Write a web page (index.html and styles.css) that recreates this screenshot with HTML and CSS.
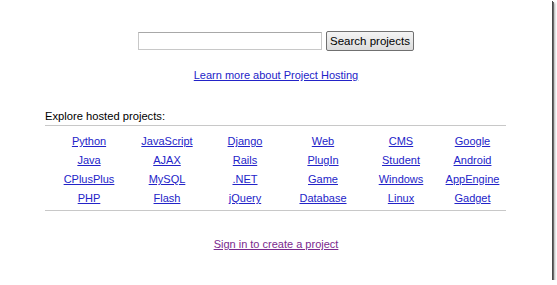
FILE: index.html
```html
<!DOCTYPE html>
<html lang="en">
<head>
  <meta charset="UTF-8">
  <meta name="viewport" content="width=device-width, initial-scale=1.0">
  <title>Project Hosting</title>
  <link rel="stylesheet" href="styles.css">
</head>
<body>
  <div class="frame">
    <form class="search" action="#">
      <input type="text" class="search-box" name="q">
      <button type="submit" class="search-btn">Search projects</button>
    </form>

    <p class="learn"><a href="#">Learn more about Project Hosting</a></p>

    <div class="explore">
      <div class="explore-title">Explore hosted projects:</div>
      <div class="labels">
        <a href="#">Python</a>
        <a href="#">JavaScript</a>
        <a href="#">Django</a>
        <a href="#">Web</a>
        <a href="#">CMS</a>
        <a href="#">Google</a>

        <a href="#">Java</a>
        <a href="#">AJAX</a>
        <a href="#">Rails</a>
        <a href="#">PlugIn</a>
        <a href="#">Student</a>
        <a href="#">Android</a>

        <a href="#">CPlusPlus</a>
        <a href="#">MySQL</a>
        <a href="#">.NET</a>
        <a href="#">Game</a>
        <a href="#">Windows</a>
        <a href="#">AppEngine</a>

        <a href="#">PHP</a>
        <a href="#">Flash</a>
        <a href="#">jQuery</a>
        <a href="#">Database</a>
        <a href="#">Linux</a>
        <a href="#">Gadget</a>
      </div>
    </div>

    <p class="signin"><a href="#" class="visited">Sign in to create a project</a></p>
  </div>
</body>
</html>
```

FILE: styles.css
```css
body {
  margin: 0;
  padding: 0;
  background: #fff;
  font-family: "Liberation Sans", Arial, sans-serif;
  font-size: 11px;
  color: #000;
}

.frame {
  width: 552px;
  height: 280px;
  background: #fff;
  box-shadow: 1px 1px 0 #4a4a4a, 2px 2px 0 #6a6a6a, 3px 3px 2px #b0b0b0;
  overflow: hidden;
}

a {
  color: #2323c8;
  text-decoration: underline;
}

a.visited {
  color: #7a2a8e;
}

.search {
  display: flex;
  justify-content: center;
  align-items: center;
  gap: 4px;
  padding-top: 31px;
  margin: 0;
}

.search-box {
  width: 180px;
  height: 14px;
  margin: 0;
  padding: 1px;
  border: 1px solid #c8c8c8;
  border-top-color: #a8a8a8;
}

.search-btn {
  height: 20px;
  margin: 0;
  padding: 0 3px;
  font-family: "Liberation Sans", Arial, sans-serif;
  font-size: 11.5px;
  color: #000;
  background: linear-gradient(#f4f4f4, #dcdcdc);
  border: 1px solid #707070;
  border-radius: 2px;
}

.learn {
  text-align: center;
  margin: 18px 0 0;
}

.explore {
  margin: 29px 46px 0 45px;
}

.explore-title {
  font-size: 11.2px;
  padding-bottom: 3px;
  border-bottom: 1px solid #c8c8c8;
}

.labels {
  display: grid;
  grid-template-columns: 78px 78px 78px 78px 78px 65px;
  grid-auto-rows: 19px;
  padding: 6px 0 2px 5px;
  border-bottom: 1px solid #c8c8c8;
  text-align: center;
  line-height: 19px;
}

.signin {
  text-align: center;
  margin: 27px 0 0;
}
```
